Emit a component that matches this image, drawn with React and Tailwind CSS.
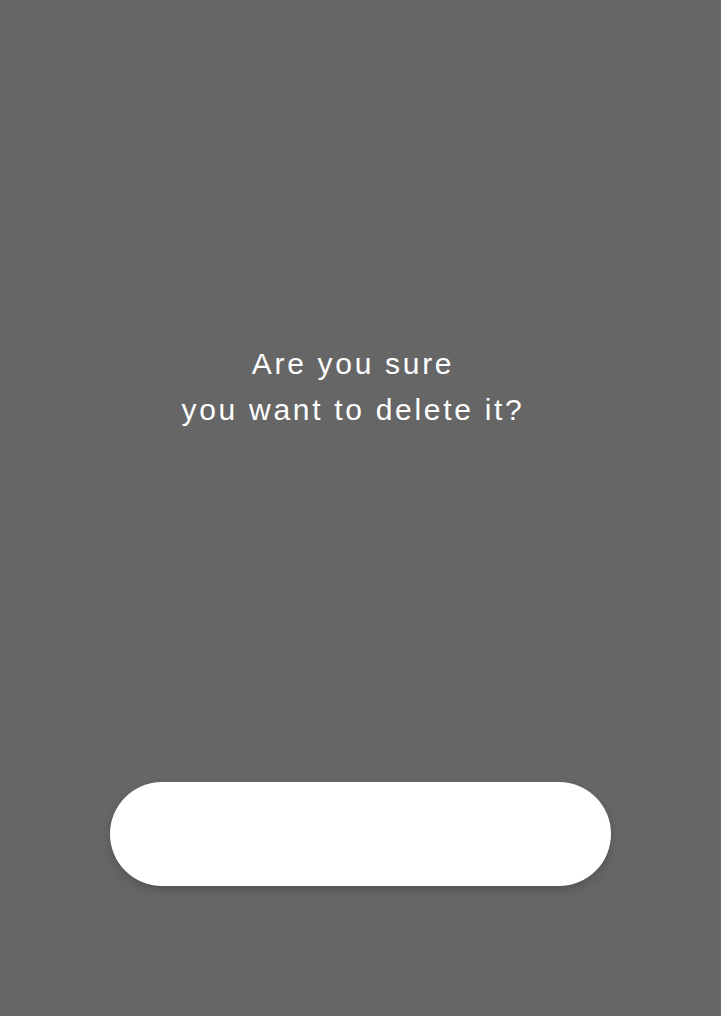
export default function App() {
  return (
    <div className="w-[721px] h-[1016px] bg-[#666666] flex flex-col items-center font-['Liberation_Sans',Arial,sans-serif]">
      <div className="mt-[341px] text-white text-[30px] leading-[46px] tracking-[2.7px] text-center pr-[15px]">
        <p>Are you sure</p>
        <p>you want to delete it?</p>
      </div>
      <button className="mt-[349px] w-[501px] h-[104px] rounded-full bg-white shadow-[0_4px_10px_rgba(0,0,0,0.18)]"></button>
    </div>
  );
}
